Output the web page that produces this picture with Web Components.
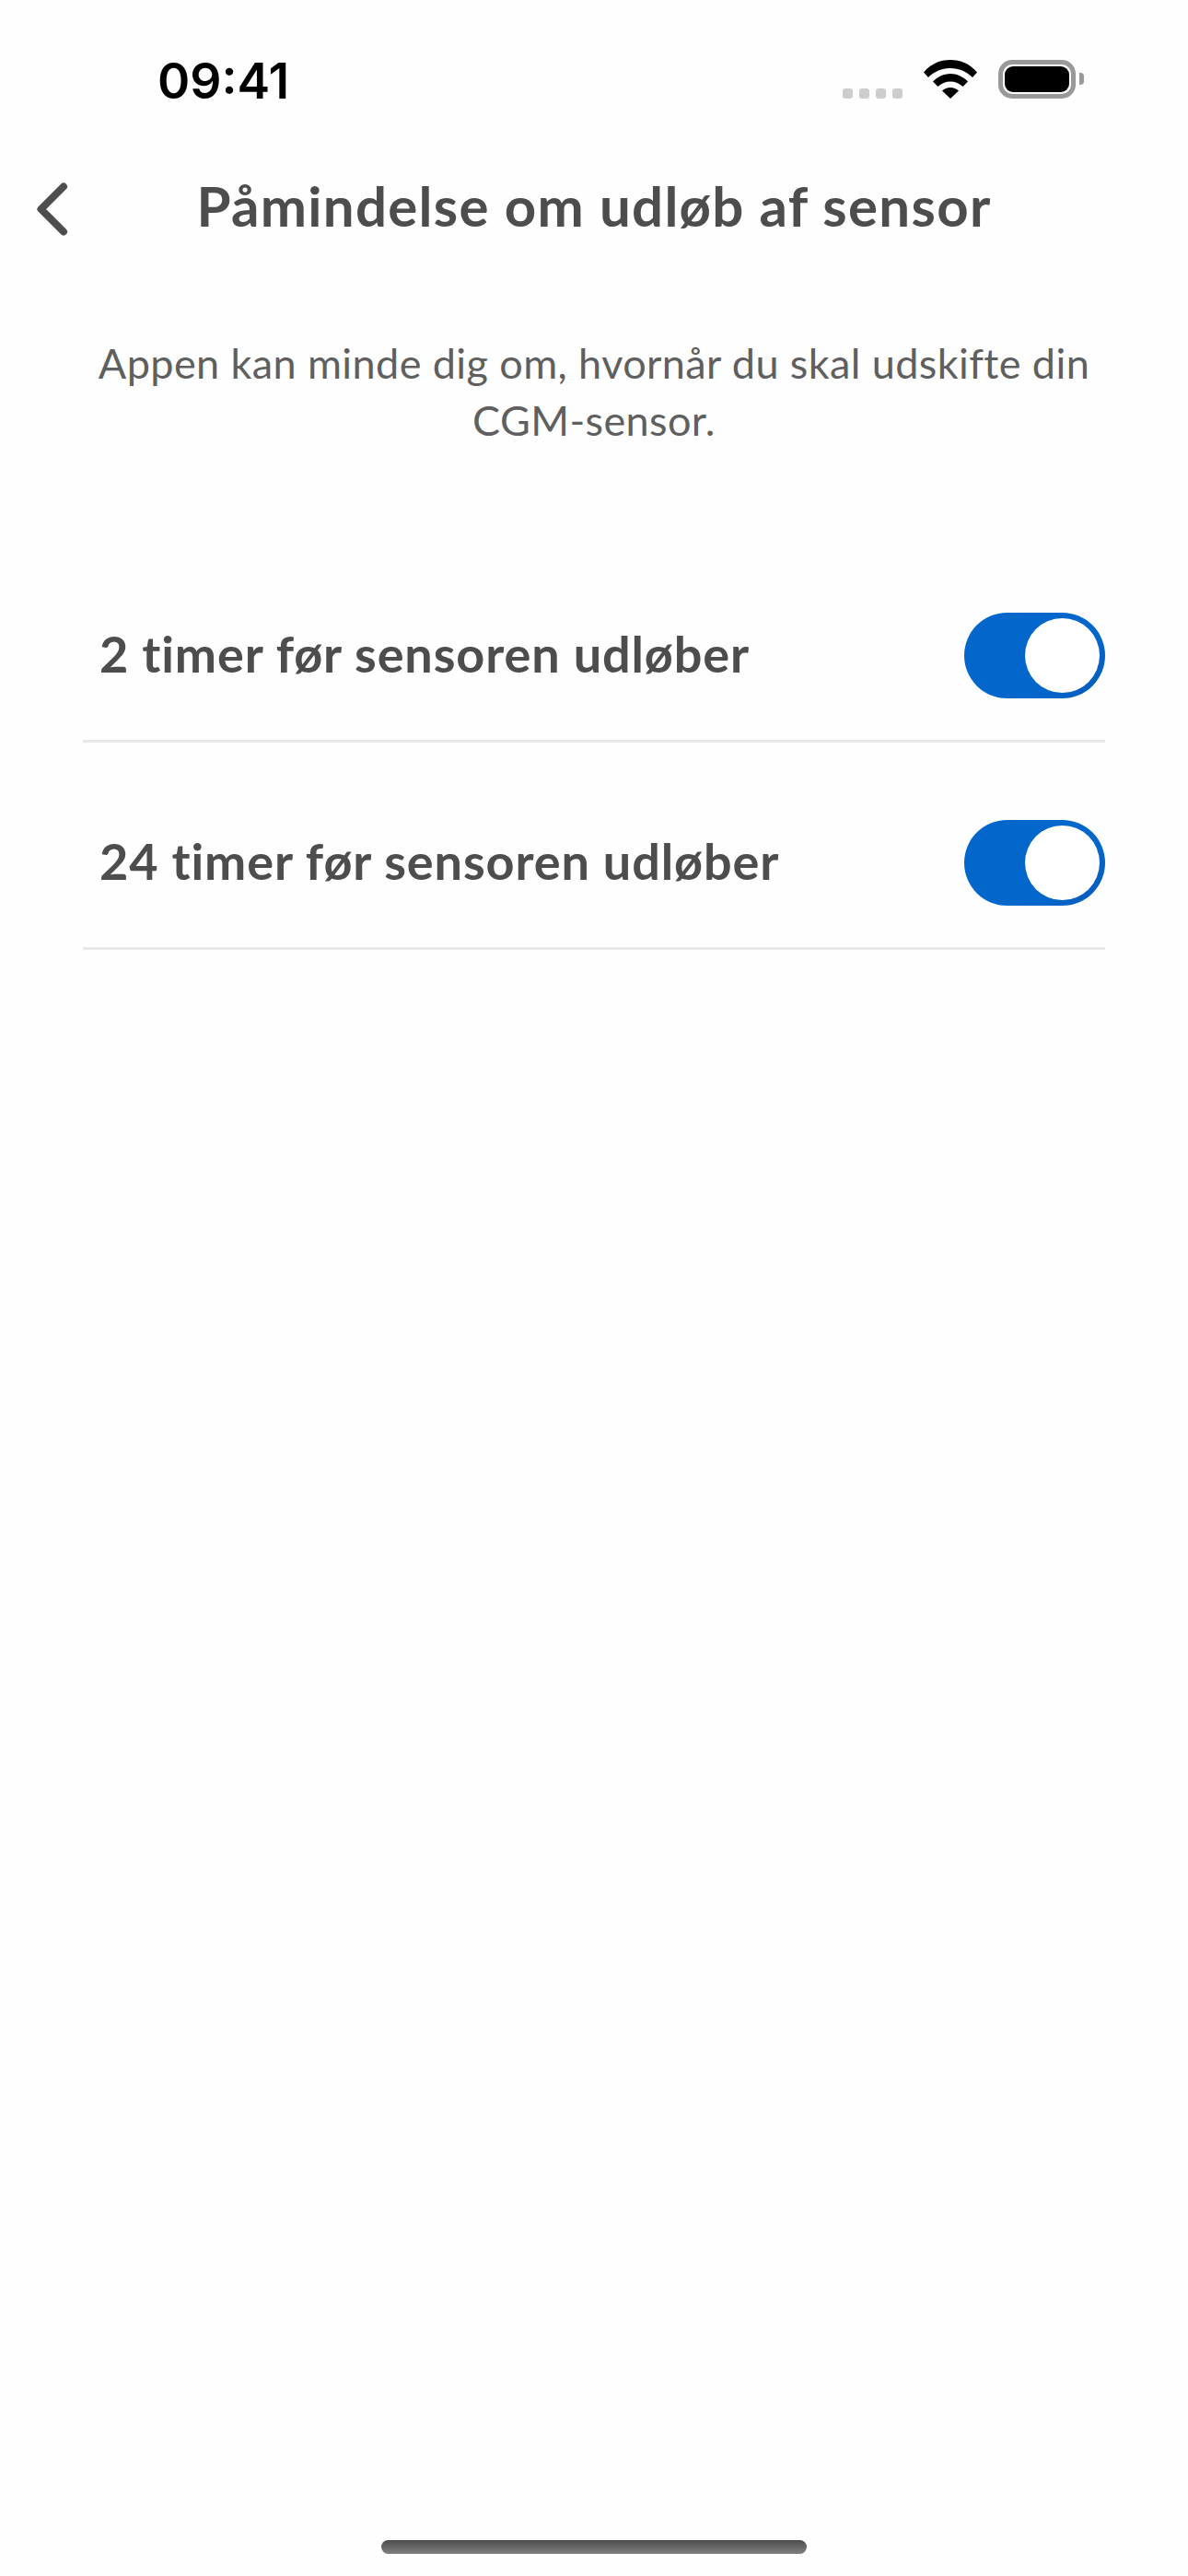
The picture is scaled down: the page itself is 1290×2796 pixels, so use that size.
<!DOCTYPE html>
<html lang="da">
<head>
<meta charset="utf-8">
<title>Påmindelse om udløb af sensor</title>
<style>
  html, body { margin: 0; padding: 0; background: #fefefe; }
  body { font-family: "Lato", "Noto Sans", sans-serif; color: #4d4d4d; }
</style>
</head>
<body>
<app-screen>
  <status-bar></status-bar>
  <nav-bar>Påmindelse om udløb af sensor</nav-bar>
  <intro-text>Appen kan minde dig om, hvornår du skal udskifte din CGM-sensor.</intro-text>
  <toggle-list>
    <toggle-row>2 timer før sensoren udløber</toggle-row>
    <toggle-row>24 timer før sensoren udløber</toggle-row>
  </toggle-list>
</app-screen>

<script>
class AppScreen extends HTMLElement {
  constructor() {
    super()
    this.attachShadow({ mode: "open" }).innerHTML = `
      <style>
        :host { display: flex; flex-direction: column; width: 1290px; height: 2796px; background: #fefefe; overflow: hidden; }
        main { flex: 1; }
        .home { flex: none; display: flex; justify-content: center; padding-bottom: 24px; }
        .bar { width: 462px; height: 15px; border-radius: 8px; background: linear-gradient(#4c4c4c, #808080); }
      </style>
      <main><slot></slot></main>
      <div class="home"><div class="bar"></div></div>
    `
  }
}
customElements.define("app-screen", AppScreen)

class StatusBar extends HTMLElement {
  constructor() {
    super()
    this.attachShadow({ mode: "open" }).innerHTML = `
      <style>
        :host { display: flex; align-items: flex-start; height: 178px; box-sizing: border-box; padding: 65px 0 0 171px; }
        .time { font: 600 53.500px/42px "Inter", sans-serif; color: #000; margin-top: 2px; }
        .right { margin-left: auto; display: flex; align-items: flex-end; height: 42px; padding-right: 113px; }
        .dots { display: flex; gap: 7px; margin-right: 23px; }
        .dots i { width: 11px; height: 11px; border-radius: 3px; background: #cdcdcd; }
        svg { display: block; }
        .wifi { margin-right: 23px; }
        .batt { box-sizing: border-box; width: 84px; height: 42px; border: 5px solid #999; border-radius: 15px; padding: 2px; }
        .batt b { display: block; height: 100%; background: #000; border-radius: 9px; }
        .nub { width: 5px; height: 13px; background: #999; border-radius: 0 4px 4px 0; margin: 0 0 15px 4px; }
      </style>
      <div class="time">09:41</div>
      <div class="right">
        <div class="dots"><i></i><i></i><i></i><i></i></div>
        <svg class="wifi" width="58" height="42" viewBox="0 0 58 42">
          <path fill="#000" d="M29 0C18 0 8 4 0 13.500L5 19C11.500 12.500 20 9 29 9S46.500 12.500 53 19L58 13.500C50 4 40 0 29 0Z"/>
          <path fill="#000" d="M29 15C22 15 15.500 18 10 23.500L15.500 29C19 25.500 24 23.500 29 23.500S39 25.500 42.500 29L48 23.500C42.500 18 36 15 29 15Z"/>
          <path fill="#000" d="M29 30C25.500 30 22.500 31.200 20 33.500L29 42L38 33.500C35.500 31.200 32.500 30 29 30Z"/>
        </svg>
        <div class="batt"><b></b></div>
        <div class="nub"></div>
      </div>
    `
  }
}
customElements.define("status-bar", StatusBar)

class NavBar extends HTMLElement {
  constructor() {
    super()
    this.attachShadow({ mode: "open" }).innerHTML = `
      <style>
        :host { display: grid; grid-template-columns: 120px 1fr 120px; align-items: center; height: 90px; }
        button { all: unset; padding-left: 40px; padding-top: 7px; display: flex; }
        svg { display: block; }
        h1 { margin: 0; text-align: center; font: 700 60px/90px "Lato", sans-serif; letter-spacing: 1.3px; color: #4d4d4d; white-space: nowrap; }
      </style>
      <button aria-label="Tilbage">
        <svg width="36" height="60" viewBox="0 0 36 60">
          <path d="M29 5.500 4.500 30 29 54.500" fill="none" stroke="#4d4d4d" stroke-width="8" stroke-linecap="round" stroke-linejoin="round"/>
        </svg>
      </button>
      <h1><slot></slot></h1>
      <span></span>
    `
  }
}
customElements.define("nav-bar", NavBar)

class IntroText extends HTMLElement {
  constructor() {
    super()
    this.attachShadow({ mode: "open" }).innerHTML = `
      <style>
        :host { display: block; box-sizing: border-box; padding: 95px 90px 0; text-align: center; font: 400 45px/62px "Lato", sans-serif; letter-spacing: 0.4px; color: #5f5f5f; height: 426px; }
      </style>
      <slot></slot>
    `
  }
}
customElements.define("intro-text", IntroText)

class ToggleList extends HTMLElement {
  constructor() {
    super()
    this.attachShadow({ mode: "open" }).innerHTML = `
      <style>
        :host { display: block; margin: -113px 90px 0; }
      </style>
      <slot></slot>
    `
  }
}
customElements.define("toggle-list", ToggleList)

class ToggleRow extends HTMLElement {
  constructor() {
    super()
    this.attachShadow({ mode: "open" }).innerHTML = `
      <style>
        :host { display: flex; align-items: center; justify-content: space-between; box-sizing: border-box; height: 225px; padding: 89px 0 50px 18px; border-bottom: 3px solid #e8e8e8; font: 700 54px/60px "Lato", sans-serif; letter-spacing: 0.9px; color: #4d4d4d; }
        span { margin-bottom: 3px; }
        .switch { flex: none; display: flex; justify-content: flex-end; box-sizing: border-box; width: 153px; height: 93px; padding: 6px; border-radius: 47px; background: linear-gradient(135deg, #0366cb 70%, #035bb8); }
        .knob { width: 81px; height: 81px; border-radius: 50%; background: #fff; }
      </style>
      <span><slot></slot></span>
      <div class="switch" role="switch" aria-checked="true"><div class="knob"></div></div>
    `
  }
}
customElements.define("toggle-row", ToggleRow)
</script>
</body>
</html>
